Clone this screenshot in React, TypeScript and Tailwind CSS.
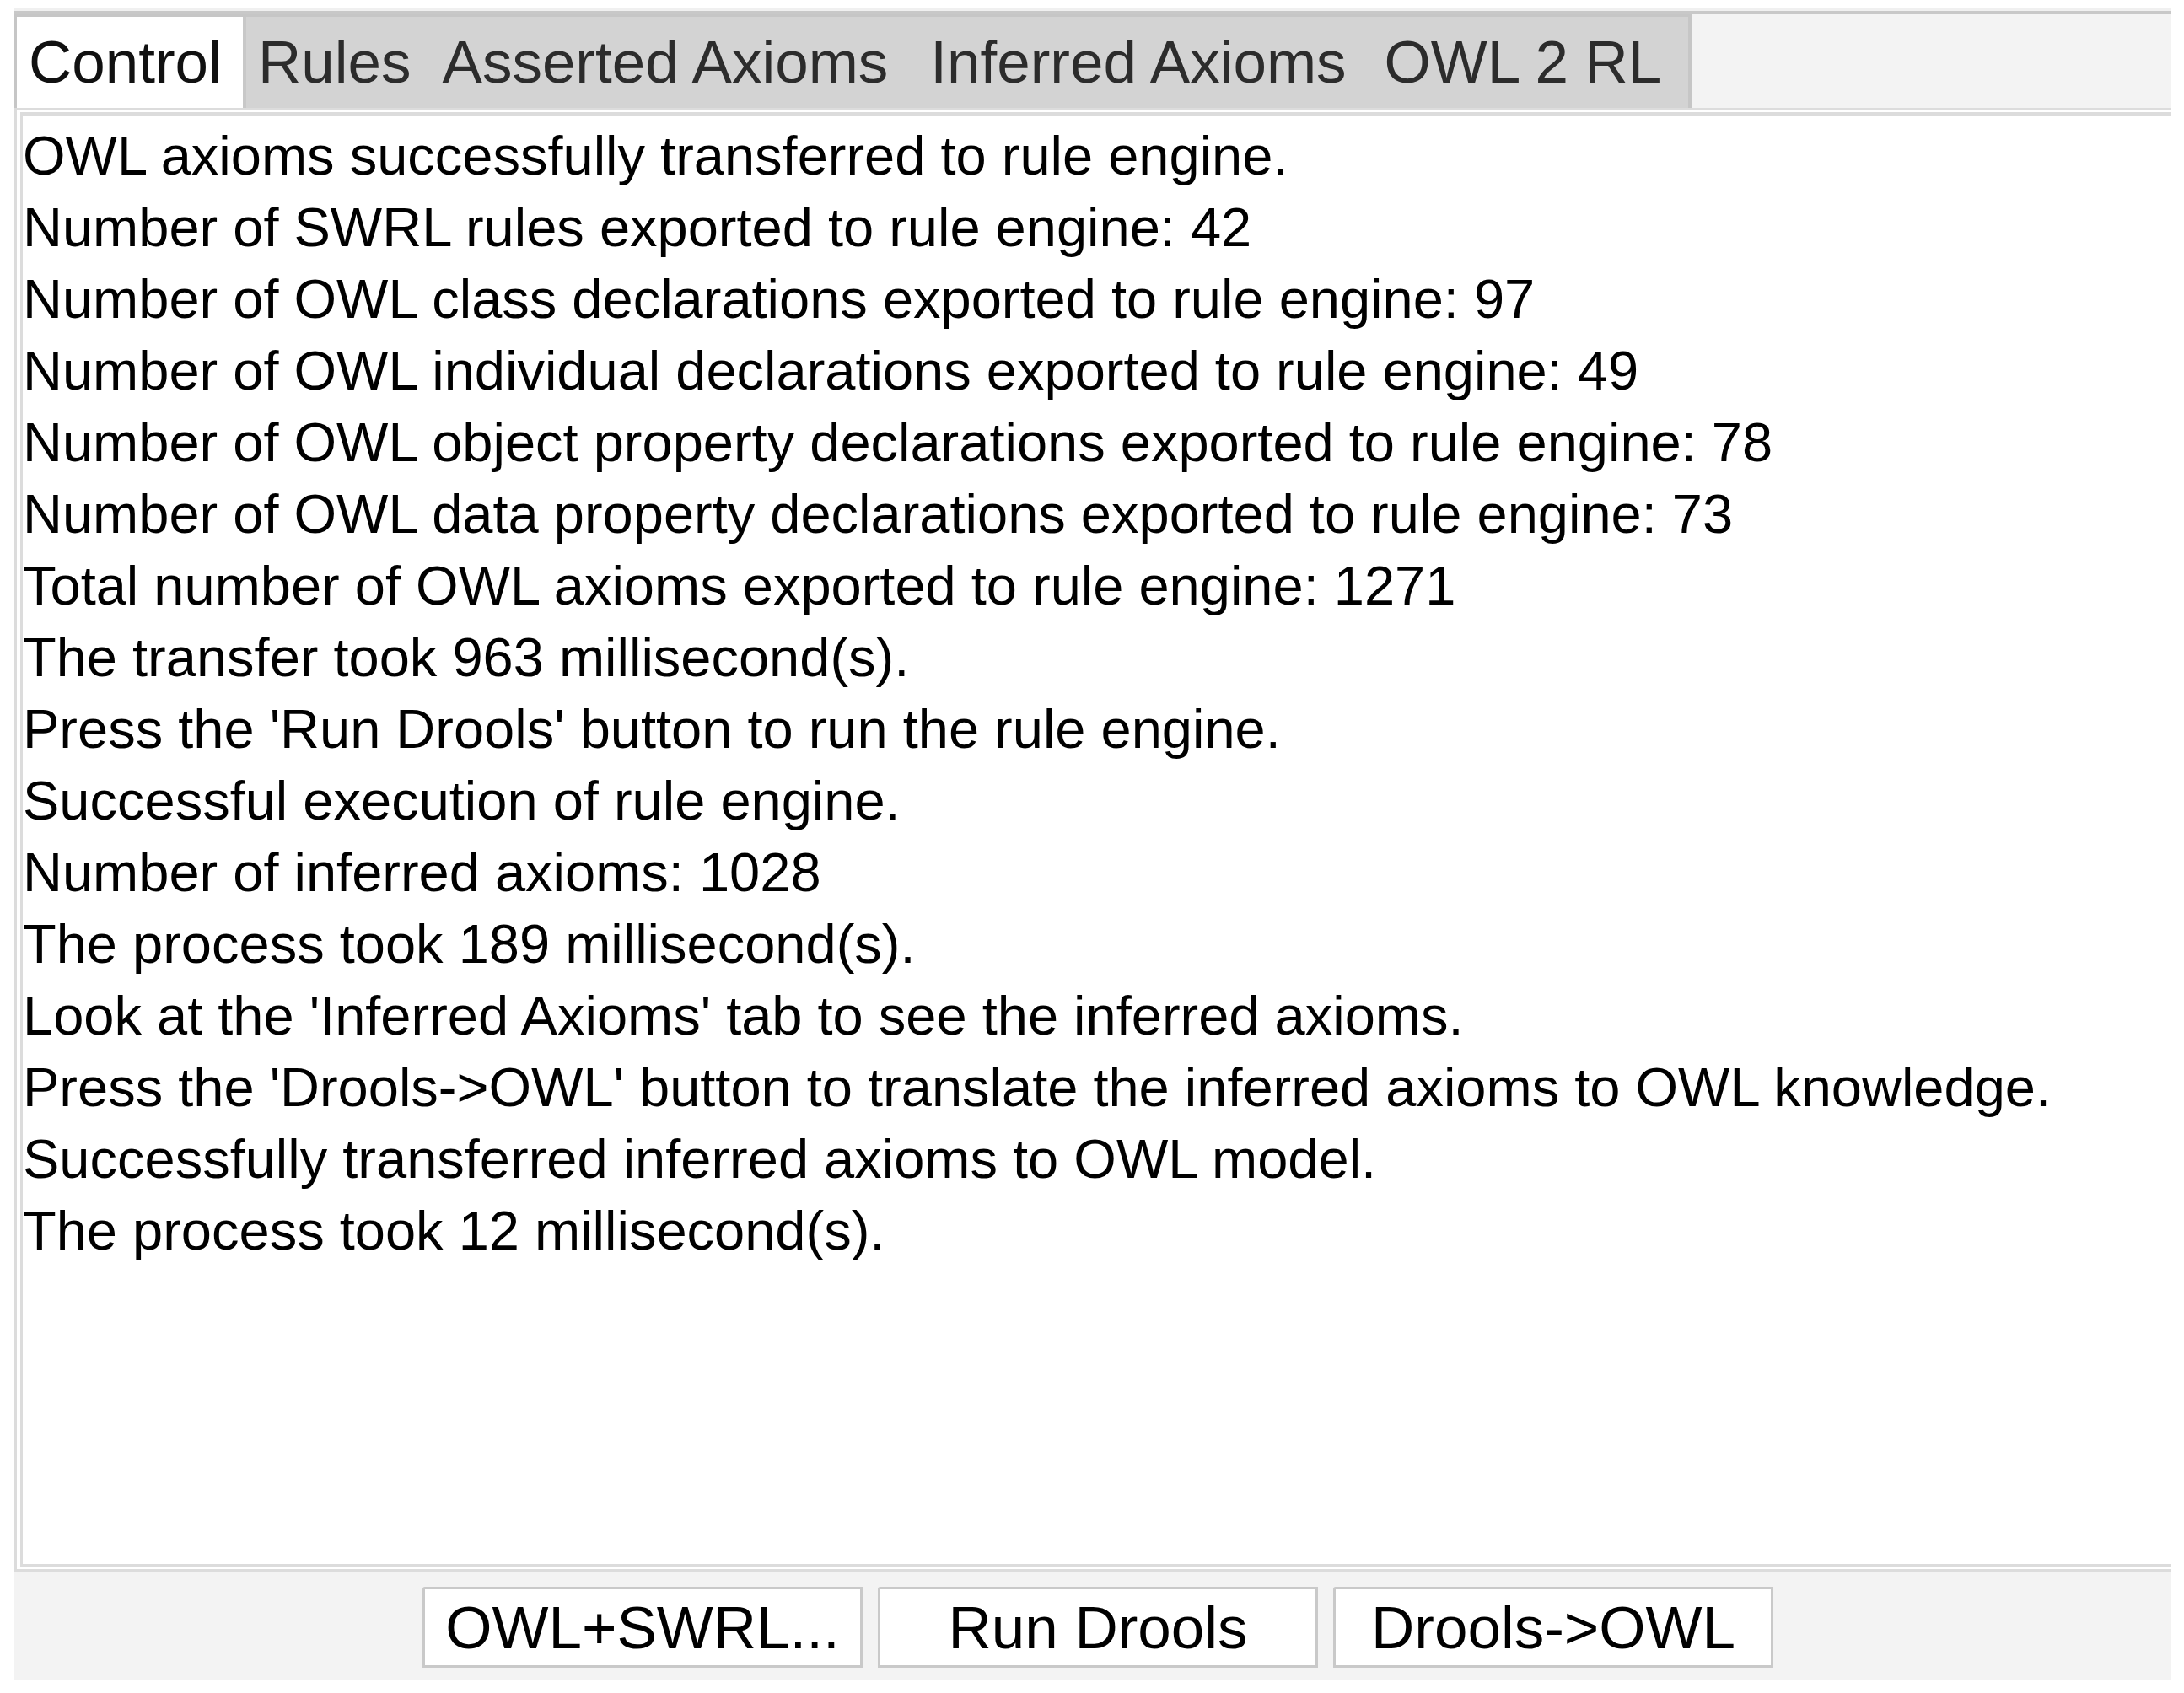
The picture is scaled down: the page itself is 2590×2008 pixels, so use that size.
import React from "react";

const lines = [
  "OWL axioms successfully transferred to rule engine.",
  "Number of SWRL rules exported to rule engine: 42",
  "Number of OWL class declarations exported to rule engine: 97",
  "Number of OWL individual declarations exported to rule engine: 49",
  "Number of OWL object property declarations exported to rule engine: 78",
  "Number of OWL data property declarations exported to rule engine: 73",
  "Total number of OWL axioms exported to rule engine: 1271",
  "The transfer took 963 millisecond(s).",
  "Press the 'Run Drools' button to run the rule engine.",
  "Successful execution of rule engine.",
  "Number of inferred axioms: 1028",
  "The process took 189 millisecond(s).",
  "Look at the 'Inferred Axioms' tab to see the inferred axioms.",
  "Press the 'Drools->OWL' button to translate the inferred axioms to OWL knowledge.",
  "Successfully transferred inferred axioms to OWL model.",
  "The process took 12 millisecond(s).",
];

const buttons = ["OWL+SWRL...", "Run Drools", "Drools->OWL"];

export default function App() {
  return (
    <div className="w-[2590px] h-[2008px] bg-white pt-[10px] pl-[17px] font-['Liberation_Sans',Arial,sans-serif] overflow-hidden">
      <div className="w-[2558px] flex flex-col">
        <div className="h-[3px] bg-[#f0f0f0]" />
        <div className="h-[4px] bg-[#c8c8c8]" />
        <div className="h-[111px] flex">
          <div className="flex border-t-[3px] border-l-[3px] border-r-[4px] border-[#c6c6c6] bg-[#d3d3d3]">
            <div className="w-[268px] bg-white flex items-center pl-[14px] pb-[2px] text-[71px] leading-none text-[#111111]">
              Control
            </div>
            <div className="w-[4px] bg-[#c8c8c8]" />
            <div className="w-[1710px] flex items-center pb-[2px] text-[71px] leading-none text-[#2c2c2c]">
              <span className="ml-[14px]">Rules</span>
              <span className="ml-[37px]">Asserted Axioms</span>
              <span className="ml-[50px]">Inferred Axioms</span>
              <span className="ml-[45px]">OWL 2 RL</span>
            </div>
          </div>
          <div className="flex-1 bg-[#f3f3f3]" />
        </div>
        <div className="h-[2px] bg-[#dcdcdc]" />
        <div className="h-[1734px] border-l-[3px] border-b-[3px] border-[#dcdcdc] bg-white pt-[3px] pl-[4px] pb-[3px] flex flex-col">
          <div className="flex-1 border-t-[4px] border-l-[3px] border-b-[3px] border-[#dcdcdc] pt-[5px] text-[65px] leading-[85px] text-black whitespace-nowrap">
            {lines.map((l, i) => (
              <div key={i}>{l}</div>
            ))}
          </div>
        </div>
        <div className="h-[129px] bg-[#f3f3f3] pt-[18px] pl-[12px] flex justify-center gap-[18px]">
          {buttons.map((b) => (
            <div
              key={b}
              className="w-[522px] h-[96px] border-[3px] border-[#c9c9c9] rounded-tl-[3px] bg-white flex items-center justify-center text-[71px] leading-none text-black"
            >
              {b}
            </div>
          ))}
        </div>
      </div>
    </div>
  );
}
